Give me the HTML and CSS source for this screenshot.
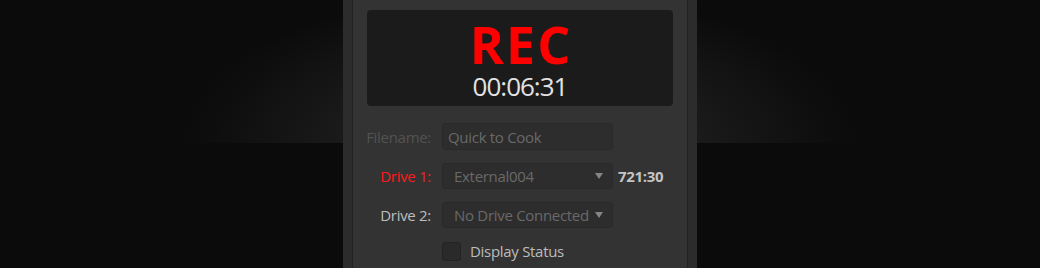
FILE: index.html
```html
<!DOCTYPE html>
<html lang="en">
<head>
<meta charset="utf-8">
<title>Record</title>
<link rel="stylesheet" href="styles.css">
</head>
<body>
<div class="stage">
  <div class="glow"></div>
  <div class="panel">
    <div class="panel-inner">
      <div class="display">
        <div class="rec">REC</div>
        <div class="timecode">00:06:31</div>
      </div>
      <div class="form">
        <label class="label dim">Filename:</label>
        <div class="field text-field">Quick to Cook</div>
        <div></div>

        <label class="label red">Drive 1:</label>
        <div class="field select"><span>External004</span><span class="caret"></span></div>
        <div class="remaining">721:30</div>

        <label class="label">Drive 2:</label>
        <div class="field select"><span>No Drive Connected</span><span class="caret"></span></div>
        <div></div>

        <div></div>
        <div class="check-row"><span class="checkbox"></span><span class="check-label">Display Status</span></div>
        <div></div>
      </div>
    </div>
  </div>
</div>
</body>
</html>
```

FILE: styles.css
```css
html, body {
  margin: 0;
  padding: 0;
  height: 100%;
  background: #0b0b0b;
  overflow: hidden;
}

body {
  font-family: "Open Sans", "Noto Sans", sans-serif;
}

.stage {
  position: relative;
  display: flex;
  justify-content: center;
  height: 268px;
}

.glow {
  position: absolute;
  top: 0;
  left: 185px;
  width: 670px;
  height: 143px;
  background: radial-gradient(ellipse 335px 155px at 50% 100%, rgba(62, 62, 62, 0.8) 0%, rgba(40, 40, 40, 0.5) 55%, rgba(11, 11, 11, 0) 100%);
}

.panel {
  position: relative;
  width: 354px;
  height: 268px;
  box-sizing: border-box;
  background: #2c2c2c;
  padding: 0 9px;
  display: flex;
}

.panel-inner {
  flex: 1;
  background: #333333;
  border-left: 1px solid #222222;
  border-right: 1px solid #222222;
  display: flex;
  flex-direction: column;
}

.display {
  margin: 10px 14px 0;
  height: 96px;
  box-sizing: border-box;
  background: #1b1b1b;
  border-radius: 4px;
  display: flex;
  flex-direction: column;
  align-items: center;
  padding-top: 8px;
}

.rec {
  color: #ff0000;
  font-weight: 700;
  font-size: 52px;
  line-height: 52px;
  letter-spacing: 2px;
  margin-right: -2px;
}

.timecode {
  color: #e2e2e2;
  font-size: 26px;
  line-height: 26px;
  letter-spacing: -1px;
  margin-top: 3px;
}

.form {
  margin-top: 17px;
  padding-left: 14px;
  display: grid;
  grid-template-columns: 64px 171px auto;
  column-gap: 11px;
  row-gap: 13px;
  align-items: center;
  font-size: 15px;
  letter-spacing: -0.3px;
}

.label {
  text-align: right;
  color: #bdbdbd;
  white-space: nowrap;
  justify-self: end;
}

.label.dim {
  color: #525252;
}

.label.red {
  color: #ff1a1a;
}

.field {
  height: 26px;
  box-sizing: border-box;
  background: #2d2d2d;
  border: 1px solid #292929;
  border-radius: 4px;
  color: #696969;
  display: flex;
  align-items: center;
  white-space: nowrap;
}

.text-field {
  height: 27px;
  padding-left: 5px;
}

.select {
  padding: 0 9px 0 11px;
  justify-content: space-between;
}

.caret {
  width: 0;
  height: 0;
  border-left: 4.5px solid transparent;
  border-right: 4.5px solid transparent;
  border-top: 6px solid #858585;
}

.remaining {
  margin-left: -6px;
  color: #c4c4c4;
  font-weight: 700;
}

.check-row {
  display: flex;
  align-items: center;
  gap: 9px;
  height: 20px;
}

.checkbox {
  width: 19px;
  height: 19px;
  box-sizing: border-box;
  background: #2a2a2a;
  border: 1px solid #232323;
  border-radius: 3px;
}

.check-label {
  color: #bcbcbc;
}
```
